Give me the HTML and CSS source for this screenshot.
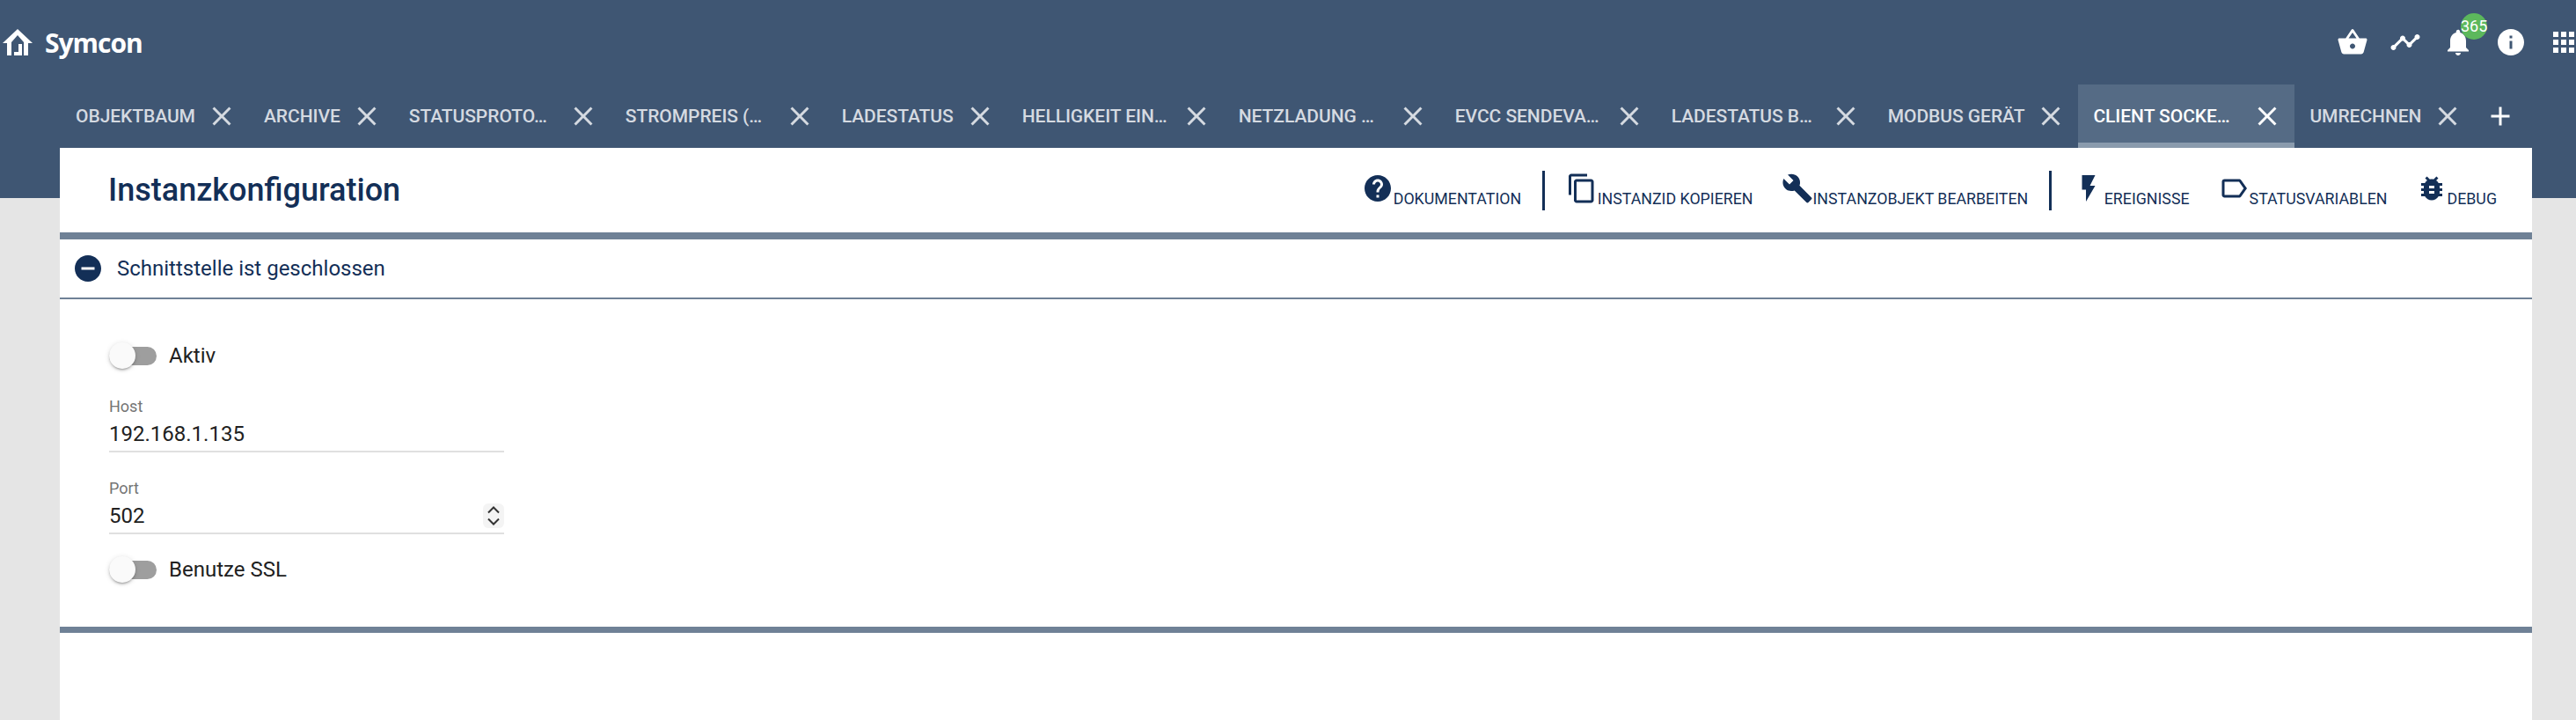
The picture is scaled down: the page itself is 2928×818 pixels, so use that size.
FILE: index.html
```html
<!DOCTYPE html>
<html lang="en">
<head>
    <meta charset="UTF-8">
    <meta name="viewport" content="width=device-width, initial-scale=1.0">
    <title>Instanzkonfiguration</title>
    <link rel="stylesheet" href="styles.css">
</head>
<body>
    <header class="header">
        <div class="topbar">
            <div class="logo">
                <svg class="logo-icon" viewBox="0 0 34 30"><path d="M0 16 17 0l17 16h-5v14h-5V15L17 7l-7 8v15H5V16zM13 30v-4h5v-9h4v13z"/></svg>
                <span class="logo-text">Symcon</span>
            </div>
            <div class="topbar-icons">
                <div class="topbar-btn"><svg class="icon" viewBox="0 0 24 24"><path d="M17.21 9l-4.38-6.56c-.19-.28-.51-.42-.83-.42-.32 0-.64.14-.83.43L6.79 9H2c-.55 0-1 .45-1 1 0 .09.01.18.04.27l2.54 9.27c.23.84 1 1.46 1.92 1.46h13c.92 0 1.69-.62 1.93-1.46l2.54-9.27L23 10c0-.55-.45-1-1-1h-4.79zM9 9l3-4.4L15 9H9zm3 8c-1.1 0-2-.9-2-2s.9-2 2-2 2 .9 2 2-.9 2-2 2z"/></svg></div>
                <div class="topbar-btn"><svg class="icon" viewBox="0 0 24 24"><path d="M23 8c0 1.1-.9 2-2 2-.18 0-.35-.02-.51-.07l-3.56 3.55c.05.16.07.34.07.52 0 1.1-.9 2-2 2s-2-.9-2-2c0-.18.02-.36.07-.52l-2.55-2.55c-.16.05-.34.07-.52.07s-.36-.02-.52-.07l-4.55 4.56c.05.16.07.33.07.51 0 1.1-.9 2-2 2s-2-.9-2-2 .9-2 2-2c.18 0 .35.02.51.07l4.56-4.55C8.02 9.36 8 9.18 8 9c0-1.1.9-2 2-2s2 .9 2 2c0 .18-.02.36-.07.52l2.55 2.55c.16-.05.34-.07.52-.07s.36.02.52.07l3.55-3.56C19.02 8.35 19 8.18 19 8c0-1.1.9-2 2-2s2 .9 2 2z"/></svg></div>
                <div class="topbar-btn">
                    <svg class="icon" viewBox="0 0 24 24"><path d="M12 22c1.1 0 2-.9 2-2h-4c0 1.1.89 2 2 2zm6-6v-5c0-3.07-1.64-5.64-4.5-6.32V4c0-.83-.67-1.5-1.5-1.5s-1.5.67-1.5 1.5v.68C7.63 5.36 6 7.92 6 11v5l-2 2v1h16v-1l-2-2z"/></svg>
                    <span class="badge">365</span>
                </div>
                <div class="topbar-btn"><svg class="icon" viewBox="0 0 24 24"><path d="M12 2C6.48 2 2 6.48 2 12s4.48 10 10 10 10-4.48 10-10S17.52 2 12 2zm1 15h-2v-6h2v6zm0-8h-2V7h2v2z"/></svg></div>
                <div class="topbar-btn"><svg class="icon" viewBox="0 0 24 24"><path d="M4 8h4V4H4v4zm6 12h4v-4h-4v4zm-6 0h4v-4H4v4zm0-6h4v-4H4v4zm6 0h4v-4h-4v4zm6-10v4h4V4h-4zm-6 4h4V4h-4v4zm6 6h4v-4h-4v4zm0 6h4v-4h-4v4z"/></svg></div>
            </div>
        </div>
        <nav class="tabs">
            <div class="tab"><span class="tab-label">OBJEKTBAUM</span><svg class="icon" viewBox="0 0 24 24"><path d="M19 6.41L17.59 5 12 10.59 6.41 5 5 6.41 10.59 12 5 17.59 6.41 19 12 13.41 17.59 19 19 17.59 13.41 12z"/></svg></div>
            <div class="tab"><span class="tab-label">ARCHIVE</span><svg class="icon" viewBox="0 0 24 24"><path d="M19 6.41L17.59 5 12 10.59 6.41 5 5 6.41 10.59 12 5 17.59 6.41 19 12 13.41 17.59 19 19 17.59 13.41 12z"/></svg></div>
            <div class="tab"><span class="tab-label long">STATUSPROTO…</span><svg class="icon" viewBox="0 0 24 24"><path d="M19 6.41L17.59 5 12 10.59 6.41 5 5 6.41 10.59 12 5 17.59 6.41 19 12 13.41 17.59 19 19 17.59 13.41 12z"/></svg></div>
            <div class="tab"><span class="tab-label long">STROMPREIS (…</span><svg class="icon" viewBox="0 0 24 24"><path d="M19 6.41L17.59 5 12 10.59 6.41 5 5 6.41 10.59 12 5 17.59 6.41 19 12 13.41 17.59 19 19 17.59 13.41 12z"/></svg></div>
            <div class="tab"><span class="tab-label">LADESTATUS</span><svg class="icon" viewBox="0 0 24 24"><path d="M19 6.41L17.59 5 12 10.59 6.41 5 5 6.41 10.59 12 5 17.59 6.41 19 12 13.41 17.59 19 19 17.59 13.41 12z"/></svg></div>
            <div class="tab"><span class="tab-label long">HELLIGKEIT EIN…</span><svg class="icon" viewBox="0 0 24 24"><path d="M19 6.41L17.59 5 12 10.59 6.41 5 5 6.41 10.59 12 5 17.59 6.41 19 12 13.41 17.59 19 19 17.59 13.41 12z"/></svg></div>
            <div class="tab"><span class="tab-label long">NETZLADUNG …</span><svg class="icon" viewBox="0 0 24 24"><path d="M19 6.41L17.59 5 12 10.59 6.41 5 5 6.41 10.59 12 5 17.59 6.41 19 12 13.41 17.59 19 19 17.59 13.41 12z"/></svg></div>
            <div class="tab"><span class="tab-label long">EVCC SENDEVA…</span><svg class="icon" viewBox="0 0 24 24"><path d="M19 6.41L17.59 5 12 10.59 6.41 5 5 6.41 10.59 12 5 17.59 6.41 19 12 13.41 17.59 19 19 17.59 13.41 12z"/></svg></div>
            <div class="tab"><span class="tab-label long">LADESTATUS B…</span><svg class="icon" viewBox="0 0 24 24"><path d="M19 6.41L17.59 5 12 10.59 6.41 5 5 6.41 10.59 12 5 17.59 6.41 19 12 13.41 17.59 19 19 17.59 13.41 12z"/></svg></div>
            <div class="tab"><span class="tab-label">MODBUS GERÄT</span><svg class="icon" viewBox="0 0 24 24"><path d="M19 6.41L17.59 5 12 10.59 6.41 5 5 6.41 10.59 12 5 17.59 6.41 19 12 13.41 17.59 19 19 17.59 13.41 12z"/></svg></div>
            <div class="tab active"><span class="tab-label long">CLIENT SOCKE…</span><svg class="icon" viewBox="0 0 24 24"><path d="M19 6.41L17.59 5 12 10.59 6.41 5 5 6.41 10.59 12 5 17.59 6.41 19 12 13.41 17.59 19 19 17.59 13.41 12z"/></svg></div>
            <div class="tab"><span class="tab-label">UMRECHNEN</span><svg class="icon" viewBox="0 0 24 24"><path d="M19 6.41L17.59 5 12 10.59 6.41 5 5 6.41 10.59 12 5 17.59 6.41 19 12 13.41 17.59 19 19 17.59 13.41 12z"/></svg></div>
            <svg class="icon tab-add" viewBox="0 0 24 24"><path d="M19 13h-6v6h-2v-6H5v-2h6V5h2v6h6v2z"/></svg>
        </nav>
    </header>

    <main class="card">
        <div class="card-head">
            <h1 class="card-title">Instanzkonfiguration</h1>
            <div class="actions">
                <div class="action"><svg class="icon" viewBox="0 0 24 24"><path d="M12 2C6.48 2 2 6.48 2 12s4.48 10 10 10 10-4.48 10-10S17.52 2 12 2zm1 17h-2v-2h2v2zm2.07-7.75l-.9.92C13.45 12.9 13 13.5 13 15h-2v-.5c0-1.1.45-2.1 1.17-2.83l1.24-1.26c.37-.36.59-.86.59-1.41 0-1.1-.9-2-2-2s-2 .9-2 2H8c0-2.21 1.79-4 4-4s4 1.79 4 4c0 .88-.36 1.68-.93 2.25z"/></svg><span>DOKUMENTATION</span></div>
                <div class="action-sep"></div>
                <div class="action"><svg class="icon" viewBox="0 0 24 24"><path d="M16 1H4c-1.1 0-2 .9-2 2v14h2V3h12V1zm3 4H8c-1.1 0-2 .9-2 2v14c0 1.1.9 2 2 2h11c1.1 0 2-.9 2-2V7c0-1.1-.9-2-2-2zm0 16H8V7h11v14z"/></svg><span>INSTANZID KOPIEREN</span></div>
                <div class="action"><svg class="icon" viewBox="0 0 24 24"><path d="M22.7 19l-9.1-9.1c.9-2.3.4-5-1.5-6.9-2-2-5-2.4-7.4-1.3L9 6 6 9 1.6 4.7C.4 7.1.9 10.1 2.9 12.1c1.9 1.9 4.6 2.4 6.9 1.5l9.1 9.1c.4.4 1 .4 1.4 0l2.3-2.3c.5-.4.5-1.1.1-1.4z"/></svg><span>INSTANZOBJEKT BEARBEITEN</span></div>
                <div class="action-sep"></div>
                <div class="action"><svg class="icon" viewBox="0 0 24 24"><path d="M7 2v11h3v9l7-12h-4l4-8z"/></svg><span>EREIGNISSE</span></div>
                <div class="action"><svg class="icon" viewBox="0 0 24 24"><path d="M17.63 5.84C17.27 5.33 16.67 5 16 5L5 5.01C3.9 5.01 3 5.9 3 7v10c0 1.1.9 1.99 2 1.99L16 19c.67 0 1.27-.33 1.63-.84L22 12l-4.37-6.16zM16 17H5V7h11l3.55 5L16 17z"/></svg><span>STATUSVARIABLEN</span></div>
                <div class="action"><svg class="icon" viewBox="0 0 24 24"><path d="M20 8h-2.81c-.45-.78-1.07-1.45-1.82-1.96L17 4.41 15.59 3l-2.17 2.17C12.96 5.06 12.49 5 12 5c-.49 0-.96.06-1.41.17L8.41 3 7 4.41l1.62 1.63C7.88 6.55 7.26 7.22 6.81 8H4v2h2.09c-.05.33-.09.66-.09 1v1H4v2h2v1c0 .34.04.67.09 1H4v2h2.81c1.04 1.79 2.97 3 5.19 3s4.15-1.21 5.19-3H20v-2h-2.09c.05-.33.09-.66.09-1v-1h2v-2h-2v-1c0-.34-.04-.67-.09-1H20V8zm-6 8h-4v-2h4v2zm0-4h-4v-2h4v2z"/></svg><span>DEBUG</span></div>
            </div>
        </div>

        <div class="status-row">
            <svg class="icon" viewBox="0 0 24 24"><path d="M12 2C6.48 2 2 6.48 2 12s4.48 10 10 10 10-4.48 10-10S17.52 2 12 2zm5 11H7v-2h10v2z"/></svg>
            <span>Schnittstelle ist geschlossen</span>
        </div>

        <form class="form">
            <div class="toggle-row">
                <div class="toggle"><div class="toggle-thumb"></div></div>
                <span>Aktiv</span>
            </div>
            <div class="field">
                <div class="field-label">Host</div>
                <div class="field-value"><span>192.168.1.135</span></div>
            </div>
            <div class="field">
                <div class="field-label">Port</div>
                <div class="field-value">
                    <span>502</span>
                    <svg class="spinner" viewBox="0 0 24 28"><path d="M6 10.5l6-6 6 6M6 17.5l6 6 6-6"/></svg>
                </div>
            </div>
            <div class="toggle-row">
                <div class="toggle"><div class="toggle-thumb"></div></div>
                <span>Benutze SSL</span>
            </div>
        </form>
    </main>
</body>
</html>
```

FILE: styles.css
```css
* {
    box-sizing: border-box;
}
html, body {
    height: 818px;
    overflow: hidden;
}
body {
    margin: 0;
    background-color: #e5e5e5;
    font-family: Roboto, sans-serif;
    font-size: 24px;
    color: #212121;
}
.icon {
    width: 36px;
    height: 36px;
    flex: none;
    fill: currentColor;
}

/* header */
.header {
    height: 225px;
    background-color: #3f5673;
    color: #fff;
}
.topbar {
    height: 96px;
    display: flex;
    align-items: center;
    justify-content: space-between;
    padding-left: 3px;
}
.logo {
    display: flex;
    align-items: center;
    gap: 14px;
}
.logo-icon {
    width: 34px;
    height: 30px;
    fill: #fff;
}
.logo-text {
    font-family: "Open Sans", sans-serif;
    font-size: 30px;
    font-weight: 700;
    letter-spacing: -1px;
}
.topbar-icons {
    display: flex;
    margin-right: -16px;
}
.topbar-btn {
    position: relative;
    width: 60px;
    height: 36px;
    display: flex;
    justify-content: center;
}
.badge {
    position: absolute;
    left: 33px;
    top: -15px;
    width: 30px;
    height: 30px;
    border-radius: 50%;
    background-color: #5cb85c;
    font-size: 18px;
    line-height: 30px;
    text-align: center;
}

/* tabs */
.tabs {
    height: 72px;
    display: flex;
    align-items: center;
    padding-left: 69px;
}
.tab {
    height: 72px;
    display: flex;
    align-items: center;
    padding: 6px 13px 0 17px;
    gap: 12px;
    color: #d5dae1;
    font-size: 21px;
    font-weight: 500;
    border-bottom: 6px solid transparent;
}
.tab-label {
    white-space: nowrap;
    letter-spacing: -.05px;
}
.tab-label.long {
    width: 168px;
}
.tab.active {
    background-color: #556b85;
    border-bottom-color: #8a9bad;
    color: #fff;
}
.tab-add {
    margin-left: 11px;
}

/* card */
.card {
    height: 650px;
    margin: -57px 50px 0 68px;
    position: relative;
    background-color: #fff;
    color: #132f57;
}
.card-head {
    height: 104px;
    display: flex;
    align-items: center;
    justify-content: space-between;
    padding: 0 40px 0 55px;
    border-bottom: 8px solid #6f8196;
}
.card-title {
    margin: 0;
    font-size: 36px;
    font-weight: 500;
}
.actions {
    display: flex;
    align-items: center;
    gap: 32px;
    font-size: 17.8px;
}
.action {
    display: flex;
    align-items: baseline;
}
.action-sep {
    width: 2.5px;
    height: 45px;
    background-color: #132f57;
    margin: 0 -8px;
}
.status-row {
    height: 68px;
    display: flex;
    align-items: center;
    gap: 15px;
    padding-left: 14px;
    border-bottom: 2px solid #6f8196;
}

/* form */
.form {
    height: 379px;
    padding: 49px 0 0 56px;
    border-bottom: 7px solid #6f8196;
    color: #212121;
}
.toggle-row {
    height: 30px;
    display: flex;
    align-items: center;
    gap: 14px;
}
.toggle {
    position: relative;
    width: 54px;
    height: 21px;
    border-radius: 11px;
    background-color: #9e9e9e;
}
.toggle-thumb {
    position: absolute;
    left: 0;
    top: -5px;
    width: 30px;
    height: 30px;
    border-radius: 50%;
    background-color: #fafafa;
    box-shadow: 0 3px 2px -2px rgba(0, 0, 0, .2), 0 2px 3px 0 rgba(0, 0, 0, .14), 0 1px 6px 0 rgba(0, 0, 0, .12);
}
.field {
    width: 449px;
    margin-top: 31px;
}
.field + .field {
    margin-top: 29px;
}
.field + .toggle-row {
    margin-top: 25px;
}
.field-label {
    height: 24px;
    line-height: 24px;
    font-size: 18px;
    color: #757575;
}
.field-value {
    height: 40px;
    line-height: 38px;
    display: flex;
    justify-content: space-between;
    border-bottom: 2px solid #e0e0e0;
}
.spinner {
    width: 24px;
    height: 28px;
    margin-top: 5px;
    border-radius: 6px;
    background-color: #f4f4f4;
    fill: none;
    stroke: #333;
    stroke-width: 2;
}
```
